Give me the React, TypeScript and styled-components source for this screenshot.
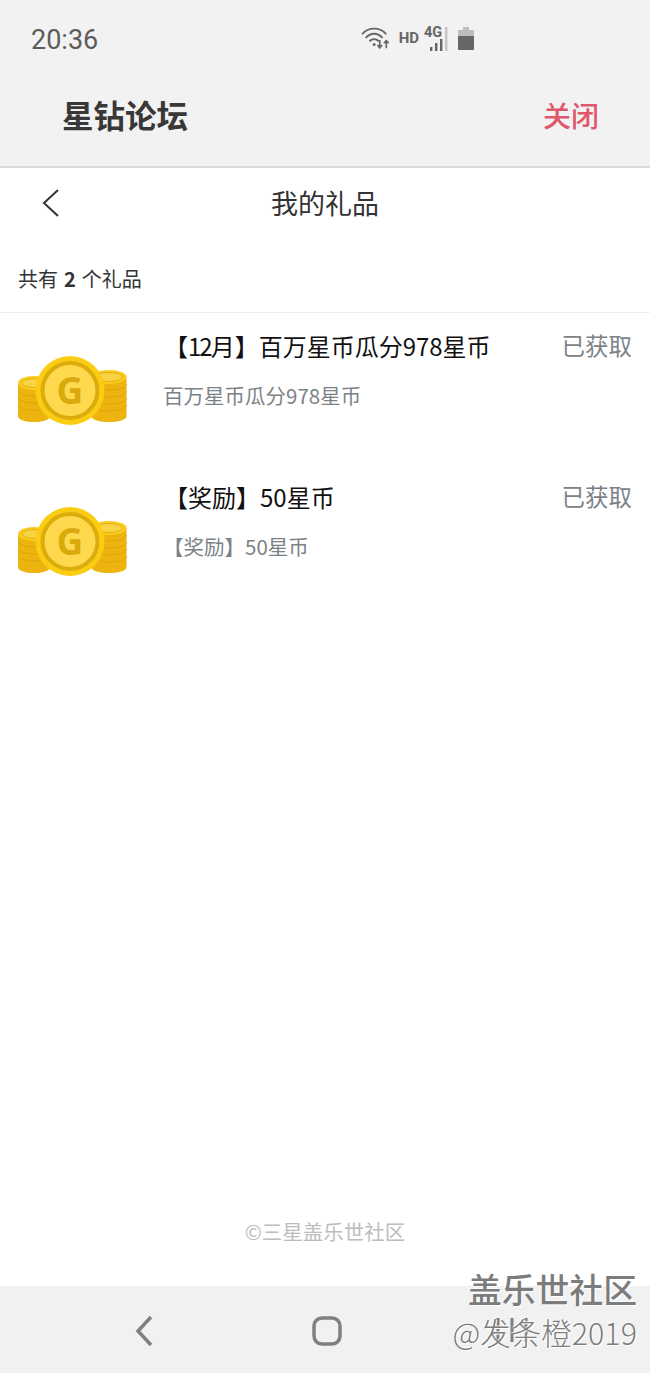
import React from 'react';
import styled, { createGlobalStyle } from 'styled-components';

const FONT = '"Noto Sans CJK SC", "Noto Sans", "Liberation Sans", sans-serif';

const GlobalStyle = createGlobalStyle`
  html, body {
    margin: 0;
    padding: 0;
    background: #fff;
    font-family: ${FONT};
  }
`;

const Screen = styled.div`
  position: relative;
  width: 650px;
  height: 1373px;
  display: flex;
  flex-direction: column;
  overflow: hidden;
  background: #fff;
`;

const Header = styled.header`
  height: 166px;
  flex: none;
  display: flex;
  flex-direction: column;
  background: #f2f2f2;
  border-bottom: 2px solid #d9d9d9;
`;

const StatusBar = styled.div`
  height: 78px;
  display: flex;
  align-items: center;
  justify-content: space-between;
  padding: 2px 176px 0 31px;
  box-sizing: border-box;
`;

const Clock = styled.span`
  font-family: Roboto, sans-serif;
  font-size: 27px;
  color: #5c5c5c;
`;

const StatusIcons = styled.div`
  display: flex;
  align-items: center;
  gap: 8px;
  margin-top: -4px;
`;

const HdLabel = styled.span`
  font-family: Roboto, sans-serif;
  font-size: 15px;
  font-weight: 700;
  color: #666;
  margin-right: -3px;
`;

const TitleBar = styled.div`
  height: 74px;
  display: flex;
  align-items: center;
  justify-content: space-between;
  padding: 0 51px 0 62px;
`;

const AppName = styled.span`
  font-size: 31.5px;
  font-weight: 700;
  line-height: 1;
  color: #383838;
`;

const CloseLink = styled.span`
  font-size: 28px;
  font-weight: 500;
  line-height: 1;
  color: #e0566a;
`;

const PageBar = styled.div`
  position: relative;
  height: 68px;
  flex: none;
  display: flex;
  align-items: center;
  justify-content: center;
`;

const BackButton = styled.span`
  position: absolute;
  left: 40px;
  top: 21px;
  display: flex;
`;

const PageTitle = styled.h1`
  margin: 0;
  font-size: 27px;
  font-weight: 400;
  line-height: 1;
  color: #333;
`;

const Summary = styled.div`
  height: 77px;
  flex: none;
  box-sizing: border-box;
  padding: 8px 0 0 18px;
  display: flex;
  align-items: center;
  font-size: 20px;
  color: #333;
  border-bottom: 1px solid #eee;

  b {
    margin: 0 6px;
    font-weight: 700;
  }
`;

const GiftList = styled.div`
  flex: 1;
  display: flex;
  flex-direction: column;
`;

const GiftRow = styled.div`
  height: 151px;
  display: grid;
  grid-template-columns: 146px 1fr auto;
  grid-template-rows: 66px auto;
  padding: 0 18px;
`;

const CoinCell = styled.div`
  grid-row: 1 / span 2;
  padding-top: 43px;
`;

const GiftName = styled.div`
  align-self: center;
  font-size: 24px;
  line-height: 1;
  color: #111;
`;

const TightDigits = styled.span`
  letter-spacing: -2px;
`;

const GiftState = styled.div`
  align-self: center;
  font-size: 23.5px;
  line-height: 1;
  color: #7b8388;
`;

const GiftNote = styled.div`
  grid-column: 2 / span 2;
  font-size: 20.5px;
  line-height: 1;
  margin-top: 6px;
  margin-left: -1px;
  color: #7b8388;
`;

const Copyright = styled.div`
  flex: none;
  height: 69px;
  text-align: center;
  font-size: 20.5px;
  line-height: 28px;
  color: #bdbdbd;
`;

const NavBar = styled.nav`
  height: 87px;
  flex: none;
  box-sizing: border-box;
  display: flex;
  align-items: center;
  background: #f1f1f1;
  padding: 2px 0 0 133px;
  gap: 155px;
`;

const Watermark = styled.div`
  position: absolute;
  right: 13px;
  bottom: 20px;
  text-align: right;
  color: #7c7c7c;
  text-shadow: 1px 1px 0 #fff, -1px -1px 0 rgba(255, 255, 255, 0.7);
`;

const WatermarkSite = styled.div`
  font-size: 33.8px;
  font-weight: 500;
  line-height: 44px;
`;

const WatermarkUser = styled.div`
  font-size: 30.5px;
  font-weight: 300;
  line-height: 42px;
`;

const RecentsIcon = styled.svg`
  position: absolute;
  left: 495px;
  top: 1316px;
`;

const WifiIcon = () => (
  <svg width="30" height="24" viewBox="0 0 32 24" fill="none" stroke="#666" strokeWidth="2">
    <path d="M1 8 C8 0 20 0 27 8" />
    <path d="M5 12 C10 6 18 6 23 12" />
    <path d="M9 15.500 C12 12.500 16 12.500 19 15.500" />
    <circle cx="14" cy="19" r="1.600" fill="#666" stroke="none" />
    <path d="M20 14 V22 M17.500 19.500 L20 22.500 L22.500 19.500" strokeWidth="1.800" />
    <path d="M27 23 V15 M24.500 17.500 L27 15 L29.500 17.500" strokeWidth="1.800" />
  </svg>
);

const SignalIcon = () => (
  <svg width="26" height="26" viewBox="0 0 26 26">
    <text x="0" y="12" fontFamily="Roboto, sans-serif" fontSize="14.500" fontWeight="700" fill="#666">4G</text>
    <rect x="6" y="22" width="2.400" height="4" fill="#666" />
    <rect x="11" y="18" width="2.400" height="8" fill="#666" />
    <rect x="16" y="14" width="2.400" height="12" fill="#666" />
    <rect x="21" y="2" width="2.400" height="24" fill="#c4c4c4" />
  </svg>
);

const BatteryIcon = () => (
  <svg width="16" height="23" viewBox="0 0 16 23">
    <path d="M5 0 H11 V3 H15 A1 1 0 0 1 16 4 V22 A1 1 0 0 1 15 23 H1 A1 1 0 0 1 0 22 V4 A1 1 0 0 1 1 3 H5 Z" fill="#bdbdbd" />
    <path d="M0 9 H16 V22 A1 1 0 0 1 15 23 H1 A1 1 0 0 1 0 22 Z" fill="#666" />
  </svg>
);

type StackProps = { x: number; y: number; rx: number; bottom: number };

// one pile of coins behind the big front coin, edges drawn as thin bands
const CoinStack = ({ x, y, rx, bottom }: StackProps) => {
  const bands: number[] = [];
  for (let n = y + 7; n < bottom - 12; n += 7) bands.push(n);
  return (
    <g>
      <path
        d={`M${x - rx} ${y} V${bottom - 6} C${x - rx} ${bottom + 2} ${x + rx} ${bottom + 2} ${x + rx} ${bottom - 6} V${y} Z`}
        fill="#edb40f"
      />
      {bands.map((n) => (
        <path
          key={n}
          d={`M${x - rx} ${n} C${x - rx} ${n + 8} ${x + rx} ${n + 8} ${x + rx} ${n}`}
          fill="none"
          stroke="#dca60c"
          strokeWidth="1"
        />
      ))}
      <ellipse cx={x} cy={y} rx={rx} ry="7" fill="#fbcb1c" />
      <ellipse cx={x} cy={y} rx={rx - 4} ry="4.500" fill="#f8d343" stroke="#e3b10f" strokeWidth="1" />
    </g>
  );
};

const CoinsIcon = () => (
  <svg width="110" height="70" viewBox="0 0 110 70">
    <CoinStack x={16} y={27} rx={16} bottom={66} />
    <CoinStack x={91} y={21} rx={17.500} bottom={66} />
    <circle cx="52" cy="34.500" r="34.500" fill="#fbcd12" />
    <circle cx="52" cy="34.500" r="27.500" fill="#ffd94d" stroke="#dcab0c" strokeWidth="4" />
    <text x="52" y="47.500" textAnchor="middle" fontFamily="Open Sans, sans-serif" fontSize="37" fontWeight="700" fill="#d9a90e">
      G
    </text>
  </svg>
);

const gifts = [
  {
    id: 'december',
    name: (
      <>
        【<TightDigits>12</TightDigits>月】百万星币瓜分978星币
      </>
    ),
    note: '百万星币瓜分978星币',
  },
  { id: 'reward', name: '【奖励】50星币', note: '【奖励】50星币' },
];

const App: React.FC = () => (
  <Screen>
    <GlobalStyle />
    <Header>
      <StatusBar>
        <Clock>20:36</Clock>
        <StatusIcons>
          <WifiIcon />
          <HdLabel>HD</HdLabel>
          <SignalIcon />
          <BatteryIcon />
        </StatusIcons>
      </StatusBar>
      <TitleBar>
        <AppName>星钻论坛</AppName>
        <CloseLink>关闭</CloseLink>
      </TitleBar>
    </Header>
    <PageBar>
      <BackButton>
        <svg width="22" height="28" viewBox="0 0 22 28" fill="none" stroke="#333" strokeWidth="2">
          <path d="M18 1 L4 14 L18 27" />
        </svg>
      </BackButton>
      <PageTitle>我的礼品</PageTitle>
    </PageBar>
    <Summary>
      共有<b>2</b>个礼品
    </Summary>
    <GiftList>
      {gifts.map((gift) => (
        <GiftRow key={gift.id}>
          <CoinCell>
            <CoinsIcon />
          </CoinCell>
          <GiftName>{gift.name}</GiftName>
          <GiftState>已获取</GiftState>
          <GiftNote>{gift.note}</GiftNote>
        </GiftRow>
      ))}
    </GiftList>
    <Copyright>©三星盖乐世社区</Copyright>
    <NavBar>
      <svg width="24" height="34" viewBox="0 0 24 34" fill="none" stroke="#808080" strokeWidth="3.500">
        <path d="M18 3 L5 17 L18 31" />
      </svg>
      <svg width="30" height="30" viewBox="0 0 30 30" fill="none" stroke="#808080" strokeWidth="3.500">
        <rect x="2" y="2" width="26" height="26" rx="8" />
      </svg>
    </NavBar>
    <RecentsIcon width="34" height="28" viewBox="0 0 34 28" stroke="#808080" strokeWidth="3" fill="none">
      <path d="M3 2 V26 M17 2 V26 M31 2 V26" />
    </RecentsIcon>
    <Watermark>
      <WatermarkSite>盖乐世社区</WatermarkSite>
      <WatermarkUser>@发条橙2019</WatermarkUser>
    </Watermark>
  </Screen>
);

export default App;
